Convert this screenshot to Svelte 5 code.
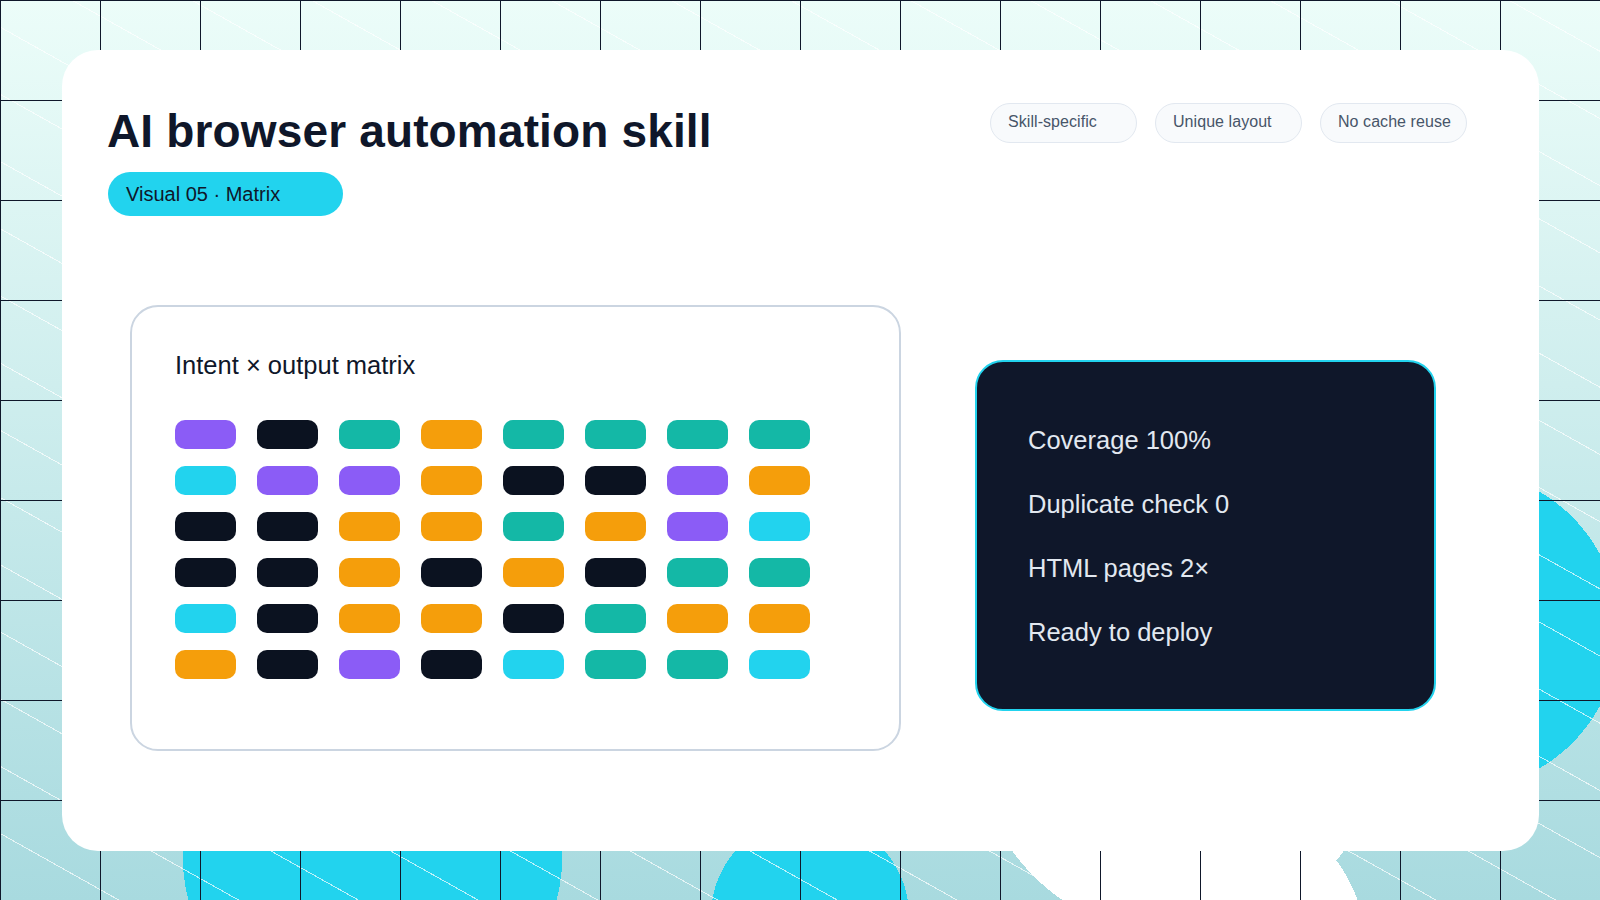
<script>
  const chips = ['Skill-specific', 'Unique layout', 'No cache reuse'];
  const names = { P: 'violet', D: 'ink', T: 'teal', O: 'amber', C: 'cyan' };
  const rows = ['PDTOTTTT', 'CPPODDPO', 'DDOOTOPC', 'DDODODTT', 'CDOODTOO', 'ODPDCTTC'];
  const cells = rows.flatMap((row) => row.split('').map((c) => names[c]));
  const stats = ['Coverage 100%', 'Duplicate check 0', 'HTML pages 2×', 'Ready to deploy'];
</script>

<div class="stage">
  <main class="card">
    <header class="head">
      <div class="intro">
        <h1>AI browser automation skill</h1>
        <div class="pill">Visual 05 · Matrix</div>
      </div>
      <ul class="chips">
        {#each chips as chip}
          <li>{chip}</li>
        {/each}
      </ul>
    </header>

    <div class="body">
      <section class="matrix">
        <h2>Intent × output matrix</h2>
        <div class="grid">
          {#each cells as cell}
            <span class={cell}></span>
          {/each}
        </div>
      </section>

      <aside class="stats">
        {#each stats as stat}
          <p>{stat}</p>
        {/each}
      </aside>
    </div>
  </main>
</div>

<style>
  :global(body) {
    margin: 0;
  }

  .stage {
    box-sizing: border-box;
    width: 1600px;
    height: 900px;
    padding: 50px 61px 49px 62px;
    overflow: hidden;
    font-family: "Liberation Sans", Arial, sans-serif;
    color: #0f172a;
    background-image:
      linear-gradient(#0f172a 1px, transparent 1px),
      linear-gradient(90deg, #0f172a 1px, transparent 1px),
      repeating-linear-gradient(29.3deg, transparent 0 57.6px, rgba(255, 255, 255, 0.7) 57.6px 58.6px),
      radial-gradient(circle at 1178px 732px, #fff 204px, transparent 204px),
      radial-gradient(circle at 1216px 950px, #fff 150px, transparent 150px),
      radial-gradient(circle at 372.5px 853px, #22d3ee 190px, transparent 190px),
      radial-gradient(circle at 810px 916px, #22d3ee 99px, transparent 99px),
      radial-gradient(circle at 1459px 630px, #22d3ee 160px, transparent 160px),
      linear-gradient(180deg, #ecfdf9, #a8dadf);
    background-size: 100px 100px, 100px 100px, auto, auto, auto, auto, auto, auto, auto;
  }

  .card {
    box-sizing: border-box;
    height: 801px;
    padding: 55px 72.5px 0 46px;
    background: #fff;
    border-radius: 36px;
  }

  .head {
    display: flex;
    justify-content: space-between;
    align-items: flex-start;
  }

  h1 {
    margin: 0 0 0 -1px;
    font-size: 46px;
    line-height: 52px;
    font-weight: 700;
    letter-spacing: 0.15px;
  }

  .pill {
    box-sizing: border-box;
    width: 235px;
    height: 44px;
    margin-top: 15px;
    padding-left: 18px;
    border-radius: 22px;
    background: #22d3ee;
    font-size: 20px;
    line-height: 44px;
  }

  .chips {
    display: flex;
    gap: 18.5px;
    margin: -2px 0 0;
    padding: 0;
    list-style: none;
  }

  .chips li {
    box-sizing: border-box;
    width: 146.5px;
    height: 40px;
    padding-left: 17px;
    border: 1px solid #e2e8f0;
    border-radius: 20px;
    background: #f8fafc;
    color: #475569;
    font-size: 16px;
    line-height: 36px;
    letter-spacing: 0.06px;
  }

  .body {
    display: flex;
    align-items: flex-start;
    gap: 74px;
    margin: 89px 0 0 22px;
  }

  .matrix {
    box-sizing: border-box;
    flex: none;
    width: 771px;
    height: 446px;
    padding: 43px 43px 0;
    border: 2px solid #cbd5e1;
    border-radius: 28px;
  }

  h2 {
    margin: 0;
    font-size: 25.5px;
    font-weight: 400;
    line-height: 30px;
  }

  .grid {
    display: grid;
    grid-template-columns: repeat(8, 61px);
    grid-auto-rows: 29px;
    gap: 17px 21px;
    margin-top: 40px;
  }

  .grid span {
    border-radius: 10px;
  }

  .violet { background: #8b5cf6; }
  .ink { background: #0b1220; }
  .teal { background: #14b8a6; }
  .amber { background: #f59e0b; }
  .cyan { background: #22d3ee; }

  .stats {
    box-sizing: border-box;
    flex: none;
    display: flex;
    flex-direction: column;
    justify-content: center;
    gap: 34px;
    width: 461px;
    height: 351px;
    margin-top: 55px;
    padding: 0 51px;
    border: 2px solid #22d3ee;
    border-radius: 28px;
    background: #0f172a;
  }

  .stats p {
    margin: 0;
    color: #e2e8f0;
    font-size: 25.5px;
    line-height: 30px;
  }
</style>
